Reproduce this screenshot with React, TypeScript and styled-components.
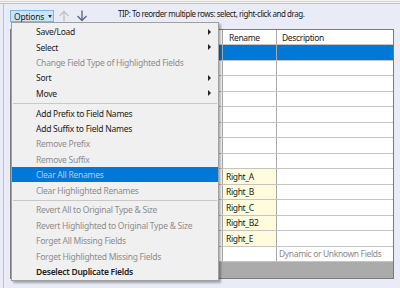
import React from 'react';
import styled, { createGlobalStyle } from 'styled-components';

const GlobalStyle = createGlobalStyle`
  html, body {
    margin: 0;
    padding: 0;
  }
  body {
    width: 400px;
    height: 288px;
    overflow: hidden;
    background: #e9ecf6;
    font-family: "Noto Sans", "Open Sans", sans-serif;
    -webkit-font-smoothing: antialiased;
  }
`;

const Page = styled.div`
  position: relative;
  width: 400px;
  height: 288px;
  background: #e9ecf6;
  display: flex;
  flex-direction: column;
`;

const TopRule = styled.div`
  height: 4px;
  flex: none;
  background: linear-gradient(#f2f2f2 0 1px, #d4d4d4 1px 2px, #f2f2f2 2px 3px, #c2c2c2 3px 4px);
`;

const Body = styled.div`
  flex: 1;
  margin-left: 3px;
  border-left: 1px solid #c4c4c4;
  padding-left: 6px;
  display: flex;
  flex-direction: column;
`;

const Toolbar = styled.div`
  height: 25px;
  display: flex;
  align-items: flex-start;
  padding-top: 6px;
  box-sizing: border-box;
`;

const OptionsButton = styled.div`
  width: 44px;
  height: 12px;
  box-sizing: border-box;
  border: 1px solid #7eb4ea;
  background: #cce4f7;
  display: flex;
  align-items: center;
  padding-left: 3px;
  font-size: 8.5px;
  letter-spacing: -0.2px;
  color: #1b1b1b;
  gap: 4px;
`;

const Caret = styled.span`
  width: 0;
  height: 0;
  border-left: 2.5px solid transparent;
  border-right: 2.5px solid transparent;
  border-top: 3px solid #333;
  margin-top: 1px;
`;

const ArrowButton = styled.div<{ $gap: number }>`
  width: 12px;
  height: 12px;
  margin-left: ${(p) => p.$gap}px;
  display: flex;
  align-items: center;
  justify-content: center;
`;

const Tip = styled.div`
  margin-left: 30px;
  margin-top: -2px;
  font-size: 8px;
  letter-spacing: -0.45px;
  line-height: 11px;
  color: #1b1b1b;
  white-space: nowrap;
`;

const Table = styled.div`
  width: 384px;
  height: 250px;
  box-sizing: border-box;
  border: 1px solid #7a7a7a;
  background: #ababab;
  display: flex;
  flex-direction: column;
`;

const Row = styled.div<{ $h?: number; $selected?: boolean }>`
  height: ${(p) => p.$h ?? 15.5}px;
  flex: none;
  box-sizing: border-box;
  display: grid;
  grid-template-columns: 212px 54px 1fr;
  border-bottom: 1px solid #c4c4c4;
  background: ${(p) => (p.$selected ? '#0078d7' : '#ffffff')};
`;

const Cell = styled.div<{ $tone?: 'head' | 'edit' | 'muted'; $pad?: number; $last?: boolean }>`
  box-sizing: border-box;
  border-right: ${(p) => (p.$last ? 'none' : '1px solid #a9a9a9')};
  padding-left: ${(p) => p.$pad ?? 3}px;
  display: flex;
  align-items: center;
  font-size: 8.5px;
  letter-spacing: -0.35px;
  white-space: nowrap;
  overflow: hidden;
  color: ${(p) => (p.$tone === 'muted' ? '#8a8a8a' : '#1b1b1b')};
  background: ${(p) => (p.$tone === 'edit' ? '#fffbdc' : 'transparent')};
`;

const Filler = styled.div`
  flex: 1;
  background: #ababab;
`;

const Menu = styled.div`
  position: absolute;
  left: 11px;
  top: 22px;
  width: 208px;
  box-sizing: border-box;
  border: 1px solid #a0a0a0;
  background: #f0f0f0;
  box-shadow: 2px 2px 2px rgba(0, 0, 0, 0.3);
  padding: 1px 0;
`;

const MenuItem = styled.div<{ $disabled?: boolean; $active?: boolean; $bold?: boolean }>`
  height: 15.4px;
  display: flex;
  align-items: center;
  padding: 0 7px 0 24px;
  font-size: 8.5px;
  letter-spacing: -0.25px;
  white-space: nowrap;
  font-weight: ${(p) => (p.$bold ? 600 : 400)};
  color: ${(p) => (p.$active ? '#b9cbe5' : p.$disabled ? '#8d8d8d' : '#222222')};
  background: ${(p) => (p.$active ? '#0078d7' : 'transparent')};
`;

const SubArrow = styled.span`
  margin-left: auto;
  width: 0;
  height: 0;
  border-top: 3px solid transparent;
  border-bottom: 3px solid transparent;
  border-left: 3px solid #222;
`;

const Separator = styled.div`
  height: 1px;
  margin: 2px 1px 1.5px;
  background: #c8c8c8;
`;

type Entry =
  | { label: string; disabled?: boolean; sub?: boolean; active?: boolean; bold?: boolean }
  | 'sep';

const menu: Entry[] = [
  { label: 'Save/Load', sub: true },
  { label: 'Select', sub: true },
  { label: 'Change Field Type of Highlighted Fields', disabled: true },
  { label: 'Sort', sub: true },
  { label: 'Move', sub: true },
  'sep',
  { label: 'Add Prefix to Field Names' },
  { label: 'Add Suffix to Field Names' },
  { label: 'Remove Prefix', disabled: true },
  { label: 'Remove Suffix', disabled: true },
  { label: 'Clear All Renames', disabled: true, active: true },
  { label: 'Clear Highlighted Renames', disabled: true },
  'sep',
  { label: 'Revert All to Original Type & Size', disabled: true },
  { label: 'Revert Highlighted to Original Type & Size', disabled: true },
  { label: 'Forget All Missing Fields', disabled: true },
  { label: 'Forget Highlighted Missing Fields', disabled: true },
  { label: 'Deselect Duplicate Fields', bold: true },
];

// rename column contents, top to bottom
const renames = ['', '', '', '', '', '', '', '', 'Right_A', 'Right_B', 'Right_C', 'Right_B2', 'Right_E'];

const Arrow: React.FC<{ dir: 'up' | 'down'; color: string }> = ({ dir, color }) => (
  <svg width="12" height="12" viewBox="0 0 12 12">
    <path
      d={dir === 'up' ? 'M6 11.5V1.5M1.5 6L6 1.5L10.5 6' : 'M6 0.5V10.5M1.5 6L6 10.5L10.5 6'}
      fill="none"
      stroke={color}
      strokeWidth="1.4"
    />
  </svg>
);

const App: React.FC = () => {
  return (
    <Page>
      <GlobalStyle />
      <TopRule />
      <Body>
        <Toolbar>
          <OptionsButton>
            Options <Caret />
          </OptionsButton>
          <ArrowButton $gap={4}>
            <Arrow dir="up" color="#c4c4c4" />
          </ArrowButton>
          <ArrowButton $gap={6}>
            <Arrow dir="down" color="#5b6b84" />
          </ArrowButton>
          <Tip>TIP: To reorder multiple rows: select, right-click and drag.</Tip>
        </Toolbar>

        <Table>
          <Row $h={15}>
            <Cell />
            <Cell $pad={6}>Rename</Cell>
            <Cell $pad={5} $last>Description</Cell>
          </Row>
          {renames.map((name, i) => (
            <Row key={i} $selected={i === 0}>
              <Cell />
              <Cell $tone={name ? 'edit' : undefined}>{name}</Cell>
              <Cell $last />
            </Row>
          ))}
          <Row>
            <Cell />
            <Cell />
            <Cell $tone="muted" $pad={2} $last>Dynamic or Unknown Fields</Cell>
          </Row>
          <Filler />
        </Table>
      </Body>

      <Menu>
        {menu.map((m, i) =>
          m === 'sep' ? (
            <Separator key={i} />
          ) : (
            <MenuItem key={i} $disabled={m.disabled} $active={m.active} $bold={m.bold}>
              {m.label}
              {m.sub && <SubArrow />}
            </MenuItem>
          )
        )}
      </Menu>
    </Page>
  );
};

export default App;
